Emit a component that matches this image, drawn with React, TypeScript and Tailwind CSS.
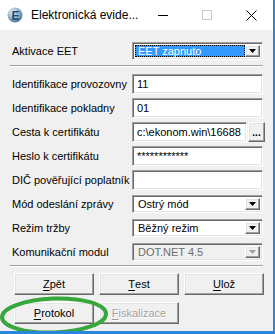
import React from "react";

const sunken =
  "border border-t-[#a0a0a0] border-l-[#a0a0a0] border-b-white border-r-white shadow-[inset_1px_1px_0_#696969,inset_-1px_-1px_0_#e3e3e3]";
const raised =
  "border border-t-white border-l-white border-b-[#696969] border-r-[#696969] shadow-[inset_-1px_-1px_0_#a0a0a0,inset_1px_1px_0_#e3e3e3]";

function Label({ children }: { children: React.ReactNode }) {
  return <div className="w-[120px] shrink-0 text-[11px] leading-[13px] text-black whitespace-nowrap">{children}</div>;
}

function Arrow({ disabled }: { disabled?: boolean }) {
  return (
    <div className={`w-[15px] h-full flex items-center justify-center bg-[#f0f0f0] ${raised}`}>
      <svg width="7" height="4" viewBox="0 0 7 4">
        <path d="M0 0 H7 L3.5 4 Z" fill={disabled ? "#a0a0a0" : "#000"} />
      </svg>
    </div>
  );
}

function Combo({ text, selected, disabled }: { text: string; selected?: boolean; disabled?: boolean }) {
  return (
    <div className={`h-[18px] w-[131px] flex p-[2px] ${sunken} ${disabled ? "bg-[#f0f0f0]" : "bg-white"}`}>
      <div
        className={`flex-1 flex items-center pl-[2px] text-[11px] whitespace-nowrap ${
          selected
            ? "bg-[#3399ff] text-white border border-dotted border-black"
            : disabled
            ? "text-[#6d6d6d] pl-[3px]"
            : "text-black pl-[3px]"
        }`}
      >
        {text}
      </div>
      <Arrow disabled={disabled} />
    </div>
  );
}

function TextBox({ text, w = "w-[131px]" }: { text?: string; w?: string }) {
  return (
    <div className={`h-[20px] ${w} bg-white flex items-center pl-[4px] ${sunken} text-[11px] text-black overflow-hidden whitespace-nowrap`}>
      {text}
    </div>
  );
}

function Btn({ children, disabled }: { children: React.ReactNode; disabled?: boolean }) {
  return (
    <div
      className={`h-[22px] flex items-center justify-center bg-[#f0f0f0] ${raised} text-[11px] ${
        disabled ? "text-[#a0a0a0] [text-shadow:1px_1px_0_#fff]" : "text-black"
      }`}
    >
      {children}
    </div>
  );
}

function Row({ label, children }: { label: string; children: React.ReactNode }) {
  return (
    <div className="h-[20px] flex items-center">
      <Label>{label}</Label>
      {children}
    </div>
  );
}

function Separator() {
  return <div className="ml-[-2px] w-[253px] h-[2px] border-t border-t-[#a0a0a0] border-b border-b-white" />;
}

export default function App() {
  return (
    <div className="w-[275px] h-[334px] relative overflow-hidden bg-[#f0f0f0] border-r-2 border-b-[3px] border-[#2b86d8] font-['Liberation_Sans',Arial,sans-serif]">
      {/* Title bar */}
      <div className="h-[30px] bg-white flex items-center">
        <div className="ml-[7px] w-[16px] h-[16px] shrink-0">
          <svg width="16" height="16" viewBox="0 0 16 16">
            <defs>
              <radialGradient id="g" cx="0.35" cy="0.3" r="0.8">
                <stop offset="0" stopColor="#e8f1f7" />
                <stop offset="0.5" stopColor="#8fb3c9" />
                <stop offset="1" stopColor="#3f6f8f" />
              </radialGradient>
            </defs>
            <circle cx="8" cy="8" r="7.5" fill="url(#g)" />
            <text x="8.5" y="12.5" textAnchor="middle" fontSize="12" fontWeight="bold" fill="#1f4f78" fontFamily="Liberation Sans, Arial, sans-serif">E</text>
          </svg>
        </div>
        <div className="ml-[8px] shrink-0 whitespace-nowrap text-[12px] text-black">Elektronická evide...</div>
        <div className="ml-auto flex h-full shrink-0">
          <div className="w-[44px] h-full flex items-center justify-center">
            <div className="w-[10px] h-px bg-black" />
          </div>
          <div className="w-[44px] h-full flex items-center justify-center">
            <div className="w-[10px] h-[10px] border border-[#c8c8c8]" />
          </div>
          <div className="w-[44px] h-full flex items-center justify-center">
            <svg width="11" height="11" viewBox="0 0 11 11">
              <path d="M0.5 0.5 L10.5 10.5 M10.5 0.5 L0.5 10.5" stroke="#000" strokeWidth="1" />
            </svg>
          </div>
        </div>
      </div>

      {/* Body */}
      <div className="flex flex-col pl-[12px]">
        <div className="mt-[12px] h-[18px] flex items-center">
          <Label>Aktivace EET</Label>
          <Combo text="EET zapnuto" selected />
        </div>
        <div className="mt-[5px]">
          <Separator />
        </div>
        <div className="mt-[7px] flex flex-col gap-[4px]">
          <Row label="Identifikace provozovny">
            <TextBox text="11" />
          </Row>
          <Row label="Identifikace pokladny">
            <TextBox text="01" />
          </Row>
          <Row label="Cesta k certifikátu">
            <div className="flex items-center">
              <TextBox text="c:\ekonom.win\16688" w="w-[115px]" />
              <div className={`ml-px h-[20px] w-[17px] flex items-end justify-center pb-[5px] bg-[#f0f0f0] ${raised}`}>
                <span className="text-[10px] leading-[6px] text-black font-bold">...</span>
              </div>
            </div>
          </Row>
          <Row label="Heslo k certifikátu">
            <TextBox text="************" />
          </Row>
          <Row label="DIČ pověřující poplatník">
            <TextBox />
          </Row>
          <Row label="Mód odeslání zprávy">
            <Combo text="Ostrý mód" />
          </Row>
          <Row label="Režim tržby">
            <Combo text="Běžný režim" />
          </Row>
          <Row label="Komunikační modul">
            <Combo text="DOT.NET 4.5" disabled />
          </Row>
        </div>
        <div className="mt-[3px]">
          <Separator />
        </div>
        <div className="mt-[6px] ml-[2px] w-[250px] grid grid-cols-3 gap-x-[5px] gap-y-[7px]">
          <Btn>
            <span className="underline underline-offset-2">Z</span>pět
          </Btn>
          <Btn>
            <span className="underline underline-offset-2">T</span>est
          </Btn>
          <Btn>
            <span className="underline underline-offset-2">U</span>lož
          </Btn>
          <Btn>
            <span className="underline underline-offset-2">P</span>rotokol
          </Btn>
          <Btn disabled>
            <span className="underline underline-offset-2">F</span>iskalizace
          </Btn>
        </div>
      </div>

      {/* Green annotation ellipse */}
      <svg className="absolute left-0 top-0 pointer-events-none" width="275" height="334" viewBox="0 0 275 334">
        <ellipse cx="54" cy="315.5" rx="52" ry="17" fill="none" stroke="#37a63d" strokeWidth="4" transform="rotate(-2 54 315.5)" />
      </svg>
    </div>
  );
}
